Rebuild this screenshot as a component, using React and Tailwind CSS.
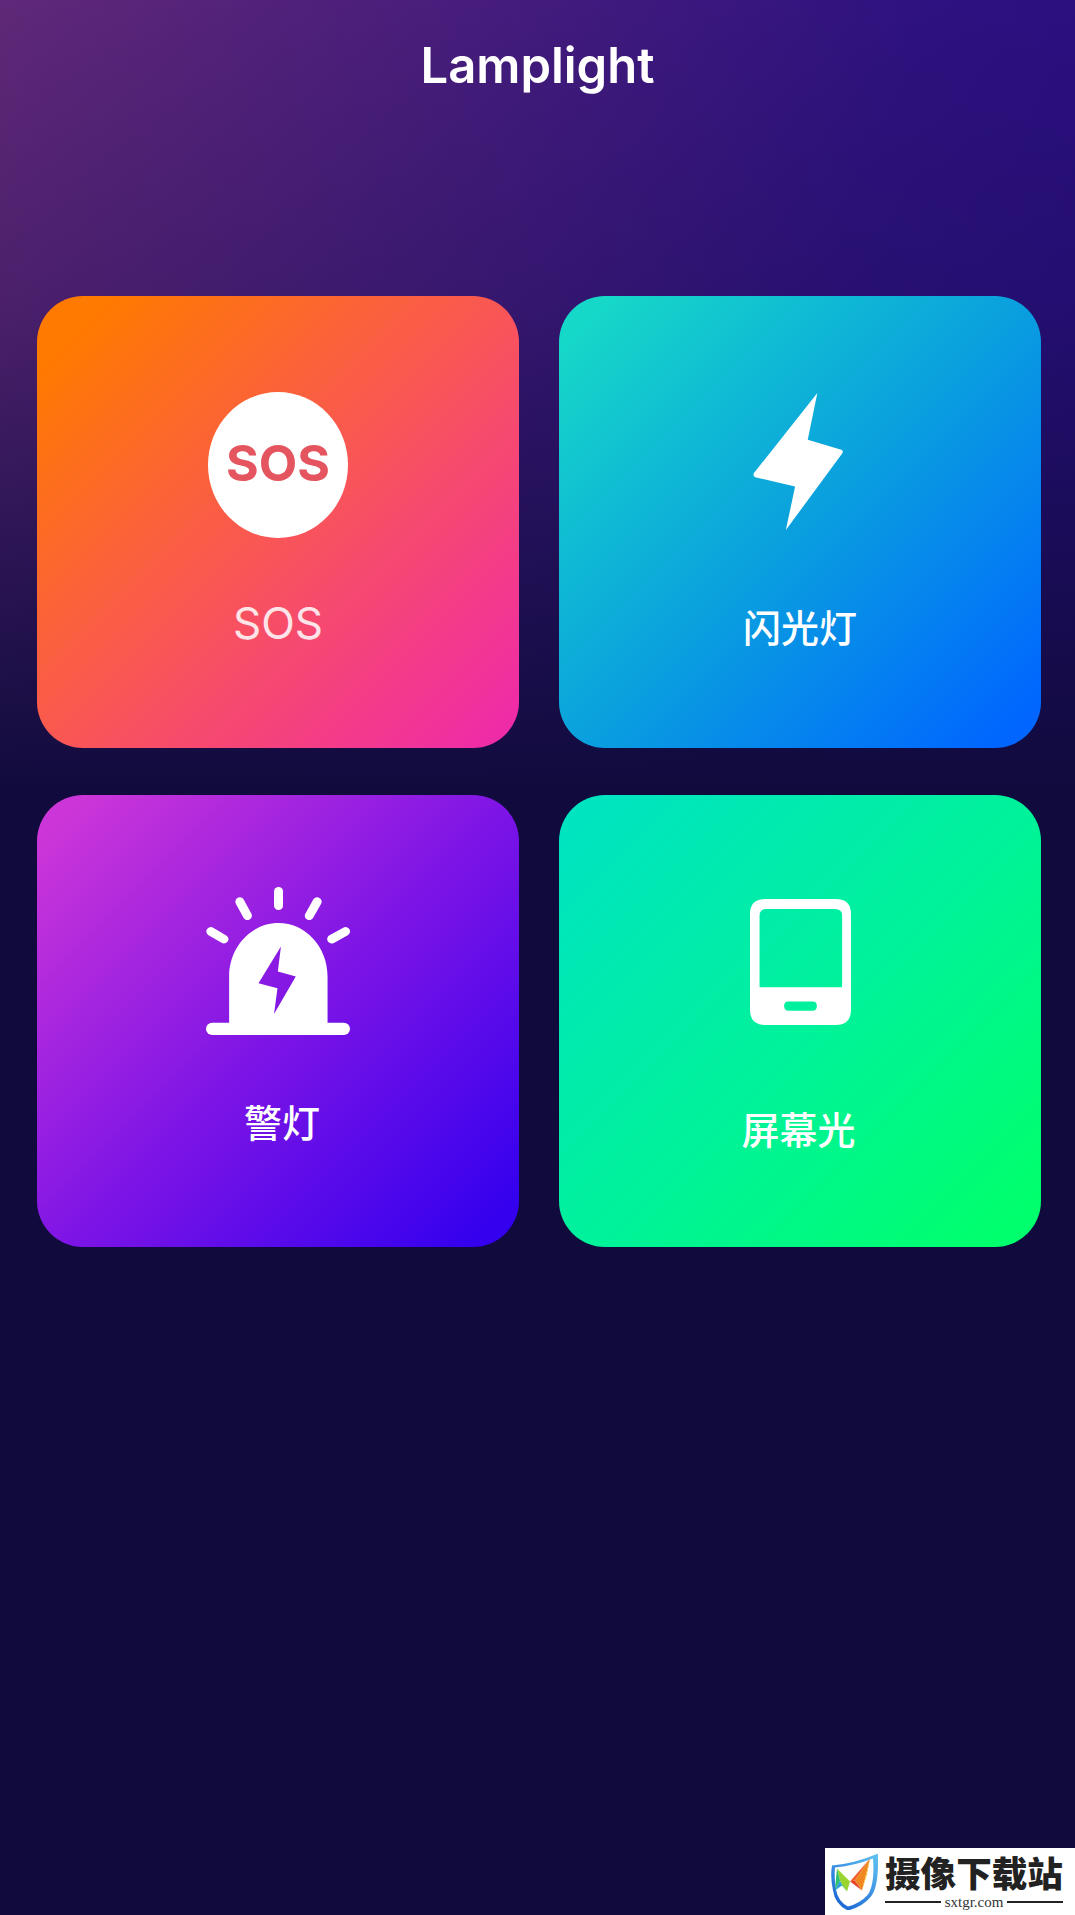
const FONT = "font-['Inter','Noto_Sans_CJK_SC',sans-serif]";

function BoltIcon() {
  return (
    <svg viewBox="622 370 263 410" preserveAspectRatio="none" className="w-[90px] h-[137px] ml-[-5px]" fill="#fff">
      <path d="M810 370 L782 510 L880 540 Q888 544 882 552 L718 780 L745 650 L628 622 Q620 616 626 608 Z" />
    </svg>
  );
}

function AlarmIcon() {
  return (
    <svg viewBox="598 322 417 443" preserveAspectRatio="none" className="w-[144px] h-[148px]" fill="#fff">
      <g stroke="#fff" strokeWidth="26" strokeLinecap="round" fill="none">
        <path d="M808 335 V378" />
        <path d="M696 366 L718 408" />
        <path d="M920 366 L897 408" />
        <path d="M612 455 L650 478" />
        <path d="M1002 455 L962 478" />
      </g>
      <path
        fillRule="evenodd"
        d="M665 735 V590 C665 500 730 430 808 430 C885 430 950 500 950 590 V735 Z M815 500 L750 610 L805 625 L795 702 L858 590 L806 575 Z"
      />
      <rect x="598" y="728" width="417" height="37" rx="18" />
    </svg>
  );
}

function PhoneIcon() {
  return (
    <svg viewBox="612 358 296 377" preserveAspectRatio="none" className="w-[101px] h-[126px]" fill="#fff">
      <path
        fillRule="evenodd"
        d="M657 358 H863 Q908 358 908 403 V690 Q908 735 863 735 H657 Q612 735 612 690 V403 Q612 358 657 358 Z M660 388 Q640 388 640 408 V622 H882 V408 Q882 388 862 388 Z M725 665 Q712 665 712 678 Q712 692 725 692 H795 Q808 692 808 678 Q808 665 795 665 Z"
      />
    </svg>
  );
}

function SosIcon() {
  return (
    <div className="w-[140px] h-[146px] rounded-[50%] bg-white flex items-center justify-center">
      <span className="text-[50px] leading-none font-bold text-[#e4555f] mb-[4px]">SOS</span>
    </div>
  );
}

function Card({ bg, pad, gap, shift, label, light, children }) {
  return (
    <div className={`h-[452px] rounded-[46px] flex flex-col items-center ${bg} ${pad}`}>
      {children}
      <div className={`${gap} ${shift} ${light ? "text-[44px] font-normal leading-[46px] text-white/85" : "text-[38px] font-medium leading-[40px] text-white"}`}>
        {label}
      </div>
    </div>
  );
}

function Watermark() {
  return (
    <div className="absolute right-0 bottom-0 w-[250px] h-[67px] bg-white flex items-center pl-[5px]">
      <svg viewBox="5 5.5 48 56" className="w-[48px] h-[56px] shrink-0">
        <defs>
          <linearGradient id="shield" x1="1" y1="0" x2="0.3" y2="1">
            <stop offset="0" stopColor="#62c6f2" />
            <stop offset="1" stopColor="#1c68d6" />
          </linearGradient>
        </defs>
        <path d="M7 17 Q30 15 53 5 Q54 38 46 48 Q38 58 23 62 Q10 56 8 42 Q5 28 7 17 Z" fill="url(#shield)" />
        <path d="M10 19 Q30 17 48 10 Q50 35 43 46 Q35 55 23 58 Q13 53 11 41 Q9 28 10 19 Z" fill="#fff" />
        <polygon points="12,20 25,33 22,43 15,32" fill="#9ad52f" />
        <polygon points="12,20 15,32 10,42 11,30" fill="#2fbf70" />
        <polygon points="15,32 10,42 17,37" fill="#2a9fd8" />
        <polygon points="15,32 22,43 17,37" fill="#35c050" />
        <polygon points="25,33 45,10 30,32" fill="#f0602a" />
        <polygon points="25,33 30,32 37,42" fill="#e8452a" />
        <polygon points="45,10 37,42 30,32" fill="#f0881f" />
        <polygon points="45,10 42,26 37,42" fill="#f7c02c" />
      </svg>
      <div className="ml-[7px] w-[178px] flex flex-col">
        <div className="font-['Noto_Sans_CJK_SC',sans-serif] font-black text-[35.6px] leading-[38px] text-[#222] whitespace-nowrap">
          摄像下载站
        </div>
        <div className="flex items-center gap-[4px] mt-[3px]">
          <div className="flex-1 h-[2px] bg-[#222]" />
          <span className="font-['Liberation_Serif',serif] text-[15px] leading-[16px] text-[#333]">sxtgr.com</span>
          <div className="flex-1 h-[2px] bg-[#222]" />
        </div>
      </div>
    </div>
  );
}

export default function App() {
  return (
    <div className={`relative min-h-screen overflow-hidden bg-[#100b3c] bg-[linear-gradient(180deg,rgba(16,11,60,0)_0px,rgba(16,11,60,0.22)_300px,#100b3c_800px),linear-gradient(105deg,#602878_0%,#2e1280_58%,#22087f_100%)] ${FONT}`}>
      <header className="h-[296px] pt-[38px] flex justify-center">
        <h1 className="text-[49px] leading-[56px] font-semibold text-white">Lamplight</h1>
      </header>

      <main className="ml-[37px] grid grid-cols-[482px_482px] gap-x-[40px] gap-y-[47px]">
        <Card bg="bg-[linear-gradient(135deg,#ff7a00_8%,#f95558_52%,#ee28ae_100%)]" pad="pt-[96px]" gap="mt-[62px]" label="SOS" light>
          <SosIcon />
        </Card>
        <Card bg="bg-[linear-gradient(135deg,#16d8c8_5%,#0aa0de_50%,#0066ff_95%)]" pad="pt-[97px]" gap="mt-[78px]" label="闪光灯">
          <BoltIcon />
        </Card>
        <Card bg="bg-[linear-gradient(135deg,#cc36d8_5%,#7c14e6_52%,#3400ee_95%)]" pad="pt-[92px]" gap="mt-[68px]" shift="ml-[8px]" label="警灯">
          <AlarmIcon />
        </Card>
        <Card bg="bg-[linear-gradient(135deg,#00e4c0_5%,#00f29a_52%,#00ff6c_95%)]" pad="pt-[104px]" gap="mt-[85px]" shift="ml-[-3px]" label="屏幕光">
          <PhoneIcon />
        </Card>
      </main>

      <Watermark />
    </div>
  );
}
